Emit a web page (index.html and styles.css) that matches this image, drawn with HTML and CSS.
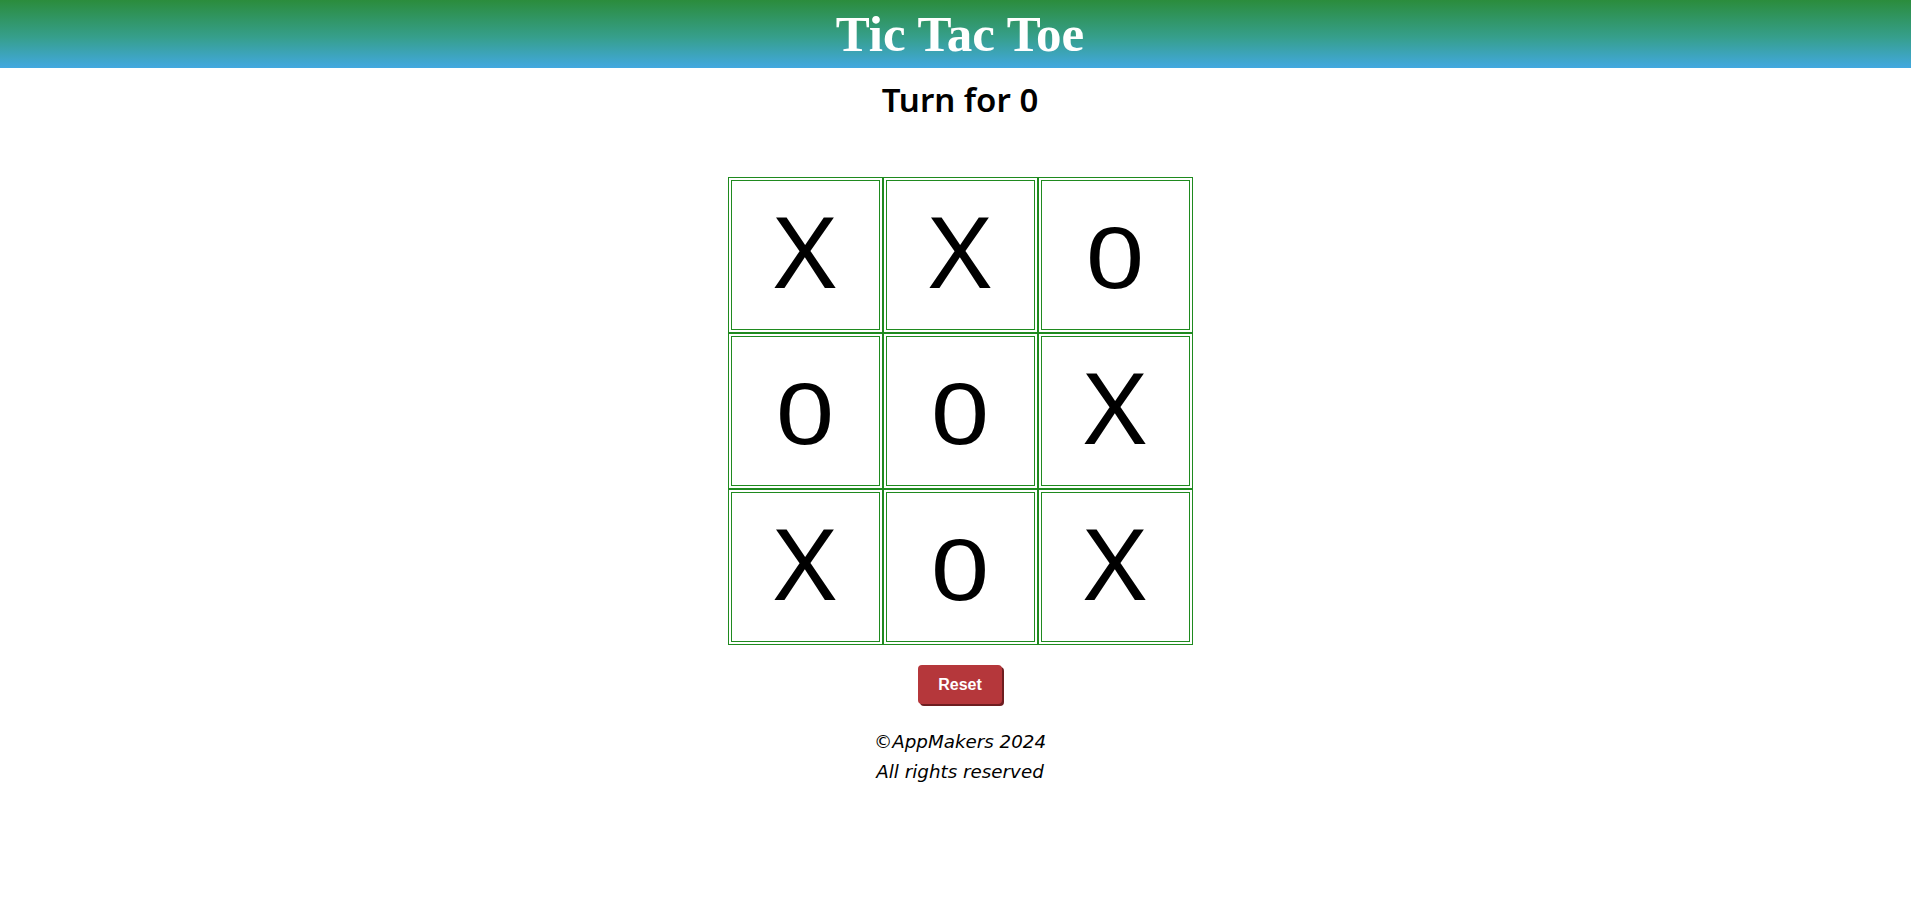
FILE: index.html
```html
<!DOCTYPE html>
<html lang="en">
<head>
<meta charset="utf-8">
<title>Tic Tac Toe</title>
<link rel="stylesheet" href="styles.css">
</head>
<body>
<div class="page">
  <header class="topbar">
    <h1 class="title">Tic Tac Toe</h1>
  </header>
  <main class="game">
    <h2 class="turn">Turn for 0</h2>
    <table class="board">
      <tr><td class="cell"><span class="mark mark-x">X</span></td><td class="cell"><span class="mark mark-x">X</span></td><td class="cell"><span class="mark mark-o">0</span></td></tr>
      <tr><td class="cell"><span class="mark mark-o">0</span></td><td class="cell"><span class="mark mark-o">0</span></td><td class="cell"><span class="mark mark-x">X</span></td></tr>
      <tr><td class="cell"><span class="mark mark-x">X</span></td><td class="cell"><span class="mark mark-o">0</span></td><td class="cell"><span class="mark mark-x">X</span></td></tr>
    </table>
    <button class="reset">Reset</button>
    <footer class="footer">
      <div class="footer-line">©AppMakers 2024</div>
      <div class="footer-line">All rights reserved</div>
    </footer>
  </main>
</div>
</body>
</html>
```

FILE: styles.css
```css
html, body {
  margin: 0;
  padding: 0;
  overflow-x: hidden;
  background: #ffffff;
}

.page {
  width: 1920px;
}

.topbar {
  height: 68px;
  display: flex;
  align-items: center;
  justify-content: center;
  background: linear-gradient(to bottom, #2b8c3c 0%, #369f8c 55%, #42a8e0 100%);
}

.title {
  margin: 0;
  font-family: "Liberation Serif", "Times New Roman", serif;
  font-weight: bold;
  font-size: 51px;
  line-height: 50px;
  color: #ffffff;
}

.game {
  display: flex;
  flex-direction: column;
  align-items: center;
}

.turn {
  margin: 12px 0 0 0;
  font-family: "Noto Sans", "Open Sans", sans-serif;
  font-weight: 600;
  font-size: 33px;
  line-height: 40px;
  color: #000000;
}

.board {
  margin-top: 57px;
  border-collapse: separate;
  border-spacing: 0;
}

.cell {
  box-sizing: border-box;
  width: 155px;
  height: 156px;
  padding: 0 0 12px 0;
  border: 4px double #1f8a1f;
  text-align: center;
  vertical-align: middle;
  font-family: "Noto Sans", "Open Sans", sans-serif;
  font-size: 99px;
  line-height: 1;
  color: #000000;
}

.mark {
  display: inline-block;
}

.mark-x {
  transform: scaleX(1.07);
}

.mark-o {
  font-size: 84px;
  transform: scaleX(1.25);
}

.reset {
  margin-top: 20px;
  width: 84px;
  height: 39px;
  border: none;
  border-radius: 4px;
  background: #b5373b;
  box-shadow: 2px 2px 0 #6e1d20;
  color: #ffffff;
  font-family: "Liberation Sans", Arial, sans-serif;
  font-weight: bold;
  font-size: 16px;
  padding: 0;
  cursor: pointer;
}

.footer {
  margin-top: 23px;
  text-align: center;
}

.footer-line {
  font-family: "DejaVu Sans", Verdana, sans-serif;
  font-style: italic;
  font-size: 18.3px;
  line-height: 30px;
  color: #000000;
}
```
